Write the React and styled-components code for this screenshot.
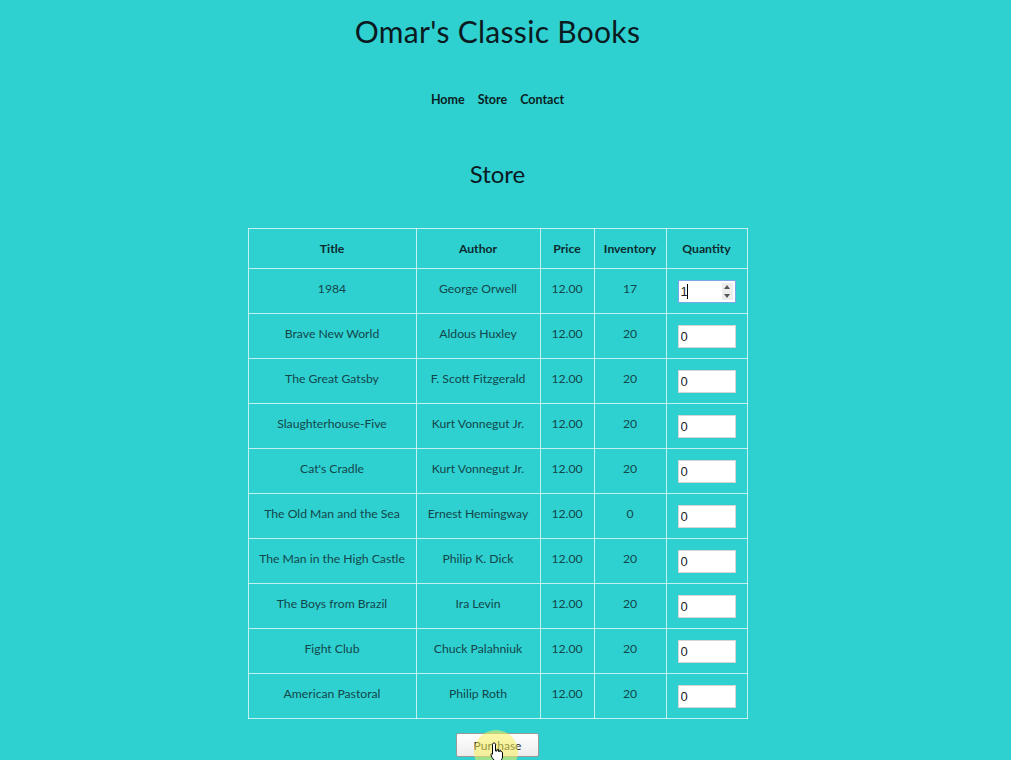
import React from 'react';
import styled, { createGlobalStyle } from 'styled-components';

const GlobalStyle = createGlobalStyle`
  html, body {
    margin: 0;
    padding: 0;
    background: #2fd0d0;
  }
  body {
    font-family: Lato, "Open Sans", sans-serif;
    color: #0c2b2e;
  }
`;

const books = [
  { title: '1984', author: 'George Orwell', price: '12.00', inventory: 17, qty: '1' },
  { title: 'Brave New World', author: 'Aldous Huxley', price: '12.00', inventory: 20, qty: '0' },
  { title: 'The Great Gatsby', author: 'F. Scott Fitzgerald', price: '12.00', inventory: 20, qty: '0' },
  { title: 'Slaughterhouse-Five', author: 'Kurt Vonnegut Jr.', price: '12.00', inventory: 20, qty: '0' },
  { title: "Cat's Cradle", author: 'Kurt Vonnegut Jr.', price: '12.00', inventory: 20, qty: '0' },
  { title: 'The Old Man and the Sea', author: 'Ernest Hemingway', price: '12.00', inventory: 0, qty: '0' },
  { title: 'The Man in the High Castle', author: 'Philip K. Dick', price: '12.00', inventory: 20, qty: '0' },
  { title: 'The Boys from Brazil', author: 'Ira Levin', price: '12.00', inventory: 20, qty: '0' },
  { title: 'Fight Club', author: 'Chuck Palahniuk', price: '12.00', inventory: 20, qty: '0' },
  { title: 'American Pastoral', author: 'Philip Roth', price: '12.00', inventory: 20, qty: '0' },
];

const Page = styled.div`
  position: relative;
  width: 995px;
  height: 760px;
  overflow: hidden;
  display: flex;
  flex-direction: column;
  align-items: center;
`;

const SiteTitle = styled.h1`
  margin: 13px 0 0;
  font-size: 30px;
  font-weight: 400;
  line-height: 36px;
  letter-spacing: 0.3px;
  color: #0a1a1f;
`;

const Nav = styled.nav`
  display: flex;
  gap: 13px;
  margin-top: 43px;
`;

const NavLink = styled.a`
  font-size: 12.5px;
  font-weight: 700;
  line-height: 16px;
  color: #0a1f22;
  text-decoration: none;
`;

const Heading = styled.h2`
  margin: 51px 0 0;
  font-size: 24px;
  font-weight: 400;
  line-height: 30px;
  color: #0a1a1f;
`;

const Table = styled.table`
  margin-top: 39px;
  border-collapse: collapse;
  border: 1px solid rgba(255, 255, 255, 0.7);
  font-size: 12.2px;
`;

const Th = styled.th`
  height: 39px;
  width: ${p => p.w}px;
  padding: 0;
  border: 1px solid rgba(255, 255, 255, 0.7);
  font-weight: 700;
  color: #0c2b2e;
  text-align: center;
`;

const Td = styled.td`
  height: ${p => (p.input ? 44 : 39)}px;
  padding: ${p => (p.input ? '0' : '0 0 5px')};
  border: 1px solid rgba(255, 255, 255, 0.7);
  color: #12474b;
  text-align: center;
  white-space: nowrap;
`;

const InputWrap = styled.div`
  position: relative;
  display: inline-block;
  width: 58px;
  height: 23px;
  margin-top: 1px;
  vertical-align: middle;
`;

const QtyInput = styled.input`
  box-sizing: border-box;
  width: 100%;
  height: 100%;
  padding: 0 2px;
  border: 1px solid ${p => (p.focused ? '#7aa7e8' : '#d6d6d6')};
  background: #fff;
  font-family: "Liberation Sans", Arial, sans-serif;
  font-size: 13px;
  color: #222;
  outline: none;
`;

const Caret = styled.span`
  position: absolute;
  left: 9px;
  top: 4px;
  width: 1px;
  height: 15px;
  background: #000;
`;

const Spinner = styled.div`
  position: absolute;
  right: 3px;
  top: 3px;
  width: 11px;
  height: 17px;
  background: #ededed;
  display: flex;
  flex-direction: column;
  align-items: center;
  justify-content: space-around;
`;

const Arrow = styled.span`
  width: 0;
  height: 0;
  border-left: 3px solid transparent;
  border-right: 3px solid transparent;
  ${p => (p.up ? 'border-bottom: 4px solid #555;' : 'border-top: 4px solid #555;')}
`;

const ButtonRow = styled.div`
  margin-top: 14px;
`;

const Button = styled.button`
  width: 83px;
  height: 24px;
  border: 1px solid #9a9a9a;
  border-radius: 2px;
  background: linear-gradient(#ffffff, #ececec);
  font-family: Lato, sans-serif;
  font-size: 12px;
  color: #222;
`;

const CursorHalo = styled.div`
  position: absolute;
  left: 474px;
  top: 730px;
  width: 44px;
  height: 44px;
  border-radius: 50%;
  background: rgba(250, 240, 90, 0.55);
  pointer-events: none;
`;

const CursorIcon = styled.svg`
  position: absolute;
  left: 490px;
  top: 742px;
  pointer-events: none;
`;

const columns = [
  { label: 'Title', w: 167 },
  { label: 'Author', w: 123 },
  { label: 'Price', w: 53 },
  { label: 'Inventory', w: 71 },
  { label: 'Quantity', w: 80 },
];

export default function App() {
  return (
    <Page>
      <GlobalStyle />
      <SiteTitle>Omar's Classic Books</SiteTitle>
      <Nav>
        <NavLink href="#">Home</NavLink>
        <NavLink href="#">Store</NavLink>
        <NavLink href="#">Contact</NavLink>
      </Nav>
      <Heading>Store</Heading>
      <Table>
        <thead>
          <tr>
            {columns.map(c => (
              <Th key={c.label} w={c.w}>{c.label}</Th>
            ))}
          </tr>
        </thead>
        <tbody>
          {books.map((b, i) => (
            <tr key={b.title}>
              <Td>{b.title}</Td>
              <Td>{b.author}</Td>
              <Td>{b.price}</Td>
              <Td>{b.inventory}</Td>
              <Td input>
                <InputWrap>
                  <QtyInput type="text" defaultValue={b.qty} focused={i === 0} />
                  {i === 0 && (
                    <>
                      <Caret />
                      <Spinner>
                        <Arrow up />
                        <Arrow />
                      </Spinner>
                    </>
                  )}
                </InputWrap>
              </Td>
            </tr>
          ))}
        </tbody>
      </Table>
      <ButtonRow>
        <Button>Purchase</Button>
      </ButtonRow>
      <CursorHalo />
      <CursorIcon width="14" height="20" viewBox="0 0 14 20">
        <path d="M4 1 C5 1 5.5 1.5 5.5 2.5 V9 H7 V8 C7 7 8.5 7 8.5 8 V9.5 H9.5 V9 C9.5 8 11 8 11 9 V10 C11 9.5 12.5 9.5 12.5 10.5 V15 C12.5 17 11 19 9 19 H6 C4.5 19 3.5 17.5 2 15.5 L1 13 C0.5 12 1.8 11.3 2.5 12.2 L2.5 2.5 C2.5 1.5 3 1 4 1 Z" fill="#fff" stroke="#000" strokeWidth="1" />
      </CursorIcon>
    </Page>
  );
}
